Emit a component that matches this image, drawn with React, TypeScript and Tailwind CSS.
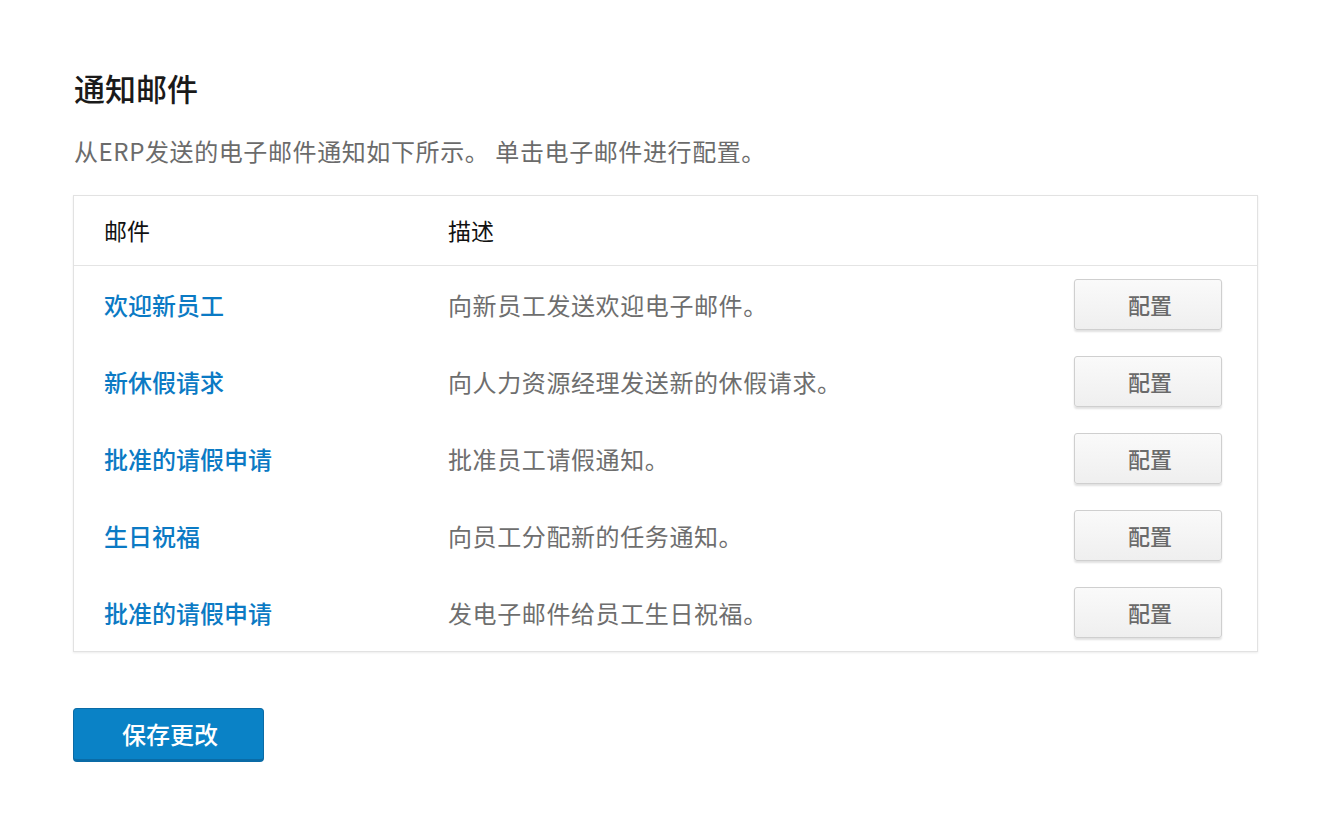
import React from "react";

const rows = [
  { name: "欢迎新员工", desc: "向新员工发送欢迎电子邮件。" },
  { name: "新休假请求", desc: "向人力资源经理发送新的休假请求。" },
  { name: "批准的请假申请", desc: "批准员工请假通知。" },
  { name: "生日祝福", desc: "向员工分配新的任务通知。" },
  { name: "批准的请假申请", desc: "发电子邮件给员工生日祝福。" },
];

export default function App() {
  return (
    <div
      className="w-[1334px] h-[838px] bg-white pl-[73px] pt-[70px]"
      style={{ fontFamily: '"Noto Sans CJK SC", "Noto Sans", sans-serif' }}
    >
      <h1 className="ml-[1px] text-[31px] leading-[36px] font-medium text-[#1a1a1a]">通知邮件</h1>
      <p className="mt-[29px] ml-[1px] text-[24px] leading-[32px] tracking-[0.6px] text-[#6b6b6b]">
        从ERP发送的电子邮件通知如下所示。 单击电子邮件进行配置。
      </p>
      <div className="mt-[28px] w-[1185px] border border-[#e2e2e2] shadow-[0_1px_2px_rgba(0,0,0,0.08)] bg-white">
        <div className="flex items-center h-[70px] border-b border-[#e4e4e4] text-[23px] text-[#111]">
          <div className="w-[374px] pl-[30px]">邮件</div>
          <div>描述</div>
        </div>
        {rows.map((r, i) => (
          <div key={i} className="flex items-center h-[77px] text-[24px]">
            <div className="w-[374px] pl-[30px] text-[#0b7ac4] font-medium">{r.name}</div>
            <div className="flex-1 text-[#6e6e6e] tracking-[0.6px]">{r.desc}</div>
            <button className="mr-[35px] w-[148px] h-[51px] pl-[4px] rounded-[3px] border border-[#cfcfcf] bg-gradient-to-b from-[#fafafa] to-[#efefef] shadow-[0_2px_2px_rgba(0,0,0,0.12)] text-[22px] text-[#6a6a6a] font-medium">
              配置
            </button>
          </div>
        ))}
      </div>
      <button className="mt-[56px] w-[191px] h-[54px] pl-[3px] rounded-[4px] bg-[#0a82c6] border border-[#0a6ba6] border-b-[3px] text-white text-[24px] font-medium">
        保存更改
      </button>
    </div>
  );
}
